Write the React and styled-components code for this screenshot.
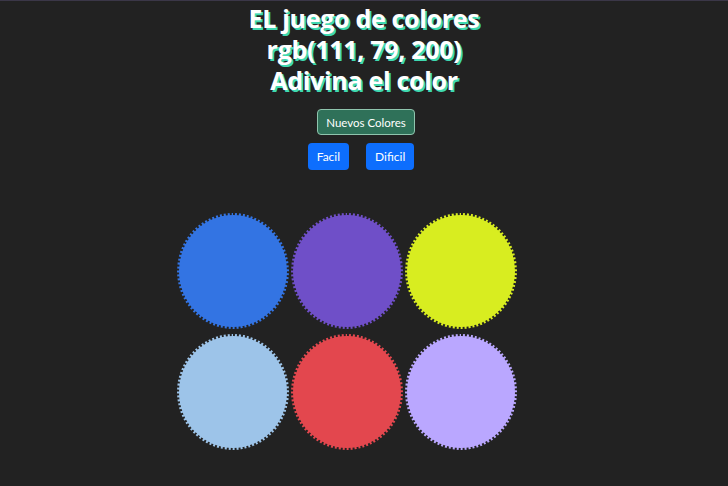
import React from "react";
import styled, { createGlobalStyle } from "styled-components";

const Global = createGlobalStyle`
  html, body { margin: 0; padding: 0; background: #222222; }
  body { border-top: 1px solid #3b3748; min-height: 485px; font-family: "Open Sans", "Noto Sans", sans-serif; }
`;

const Page = styled.div`
  display: flex;
  flex-direction: column;
  align-items: center;
`;

const Title = styled.h1`
  margin: 0;
  padding-top: 2px;
  color: #ffffff;
  font-family: "Open Sans", "Noto Sans", sans-serif;
  font-weight: 700;
  font-size: 25px;
  line-height: 31px;
  text-align: center;
  text-shadow: 2px 2px 0 #3fd9b0;
  letter-spacing: -0.3px;
`;

const NewButton = styled.button`
  margin-top: 13px;
  margin-left: 4px;
  height: 26px;
  padding: 0 8px;
  background: #2f7159;
  color: #ffffff;
  border: 1px solid #8fc4ad;
  border-radius: 4px;
  font-family: "Lato", "Open Sans", sans-serif;
  font-size: 11.5px;
  cursor: pointer;
`;

const ModeRow = styled.div`
  display: flex;
  gap: 17px;
  margin-top: 8px;
  margin-right: 6px;
`;

const ModeButton = styled.button`
  height: 27px;
  padding: 0 9px;
  background: #0d6efd;
  color: #ffffff;
  border: none;
  border-radius: 4px;
  font-family: "Lato", "Open Sans", sans-serif;
  font-size: 12px;
  cursor: pointer;
`;

const Board = styled.div`
  margin-top: 43px;
  width: 340px;
  padding-right: 34px;
  display: grid;
  grid-template-columns: repeat(3, 112px);
  column-gap: 2px;
  row-gap: 5px;
`;

const Square = styled.div`
  width: 112px;
  height: 116px;
  border-radius: 50%;
  box-sizing: border-box;
  border: 2px dotted #222222;
  background: ${(p) => p.$color};
`;

const colors = [
  "rgb(51, 116, 227)",
  "rgb(111, 79, 200)",
  "rgb(216, 237, 32)",
  "rgb(157, 196, 233)",
  "rgb(227, 71, 78)",
  "rgb(186, 167, 255)",
];

export default function App() {
  return (
    <>
      <Global />
      <Page>
        <Title>
          EL juego de colores
          <br />
          rgb(111, 79, 200)
          <br />
          Adivina el color
        </Title>
        <NewButton>Nuevos Colores</NewButton>
        <ModeRow>
          <ModeButton>Facil</ModeButton>
          <ModeButton>Dificil</ModeButton>
        </ModeRow>
        <Board>
          {colors.map((c) => (
            <Square key={c} $color={c} />
          ))}
        </Board>
      </Page>
    </>
  );
}
